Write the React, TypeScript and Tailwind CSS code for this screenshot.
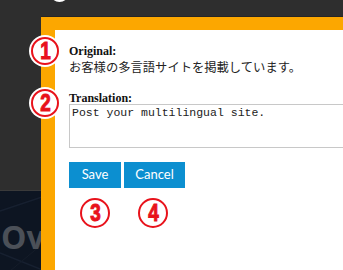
import React from "react";

function Badge({ n, ring }: { n: string; ring?: boolean }) {
  return (
    <div
      className={
        "flex items-center justify-center rounded-full bg-white " +
        (ring ? "h-[32px] w-[32px] p-[2px]" : "h-[30px] w-[30px]")
      }
    >
      <div className="flex h-full w-full items-center justify-center rounded-full border-[2.5px] border-[#e8121b] bg-white">
        <span
          className="inline-block scale-x-[0.82] text-[23px] font-bold leading-none text-[#e8121b] [-webkit-text-stroke:1px_#e8121b]"
          style={{ fontFamily: '"Liberation Sans", Arial, sans-serif' }}
        >
          {n}
        </span>
      </div>
    </div>
  );
}

export default function App() {
  return (
    <div className="relative h-[270px] w-[343px] overflow-hidden bg-[#2d2d2d]">
      {/* background page */}
      <div className="flex h-full flex-col">
        <div className="h-[191px] bg-[#2e2e2e] border-b border-[#3a3a3a]" />
        <div className="relative flex-1 overflow-hidden bg-[#0d1522]">
          <svg className="absolute inset-0" width="60" height="80" viewBox="0 0 60 80">
            <line x1="0" y1="20" x2="60" y2="0" stroke="#172030" strokeWidth="1.5" />
            <line x1="0" y1="62" x2="45" y2="80" stroke="#172030" strokeWidth="1.5" />
            <line x1="10" y1="80" x2="40" y2="55" stroke="#151d2a" strokeWidth="1" />
          </svg>
          <div
            className="relative pl-[1px] pt-[30px] text-[32px] font-bold leading-[32px] text-[#4b5058]"
            style={{ fontFamily: '"Open Sans", Arial, sans-serif' }}
          >
            Ov
          </div>
        </div>
      </div>

      {/* close button peeking at top */}
      <div className="absolute left-[50px] top-[-17px] h-[19px] w-[19px] rounded-full bg-white" />

      {/* modal */}
      <div className="absolute left-[41px] top-[16px] h-[280px] w-[330px] border-t border-[#252525]">
        <div className="h-full border-l-[14px] border-t-[13px] border-[#fca700] bg-white p-[14px]">
          <div
            className="text-[12px] font-bold leading-[14px] text-[#111]"
            style={{ fontFamily: '"Liberation Serif", "Times New Roman", serif' }}
          >
            Original:
          </div>
          <div
            className="mt-[1px] text-[12.3px] leading-[16px] text-[#222]"
            style={{ fontFamily: '"Noto Sans CJK JP", "Noto Sans", sans-serif' }}
          >
            お客様の多言語サイトを掲載しています。
          </div>
          <div
            className="mt-[17px] text-[12px] font-bold leading-[12px] text-[#111]"
            style={{ fontFamily: '"Liberation Serif", "Times New Roman", serif' }}
          >
            Translation:
          </div>
          <textarea
            className="block h-[44px] w-[300px] resize-none border border-[#c8c8c8] px-[2px] pt-[1px] text-[11.5px] leading-[13px] text-[#222] outline-none"
            style={{ fontFamily: '"Liberation Mono", "Courier New", monospace' }}
            defaultValue="Post your multilingual site."
          />
          <div
            className="mt-[14px] flex gap-[3px] text-[13px] text-white"
            style={{ fontFamily: 'Lato, "Noto Sans", sans-serif' }}
          >
            <div className="flex h-[26px] w-[52px] items-center justify-center bg-[#0c8fd0]">Save</div>
            <div className="flex h-[26px] w-[61px] items-center justify-center bg-[#0c8fd0]">Cancel</div>
          </div>
          <div className="mt-[10px] flex">
            <div className="ml-[11px]">
              <Badge n="3" />
            </div>
            <div className="ml-[28px]">
              <Badge n="4" />
            </div>
          </div>
        </div>
      </div>

      {/* numbered markers 1 and 2 */}
      <div className="absolute left-[29px] top-[35px]">
        <Badge n="1" ring />
      </div>
      <div className="absolute left-[29px] top-[87px]">
        <Badge n="2" ring />
      </div>
    </div>
  );
}
